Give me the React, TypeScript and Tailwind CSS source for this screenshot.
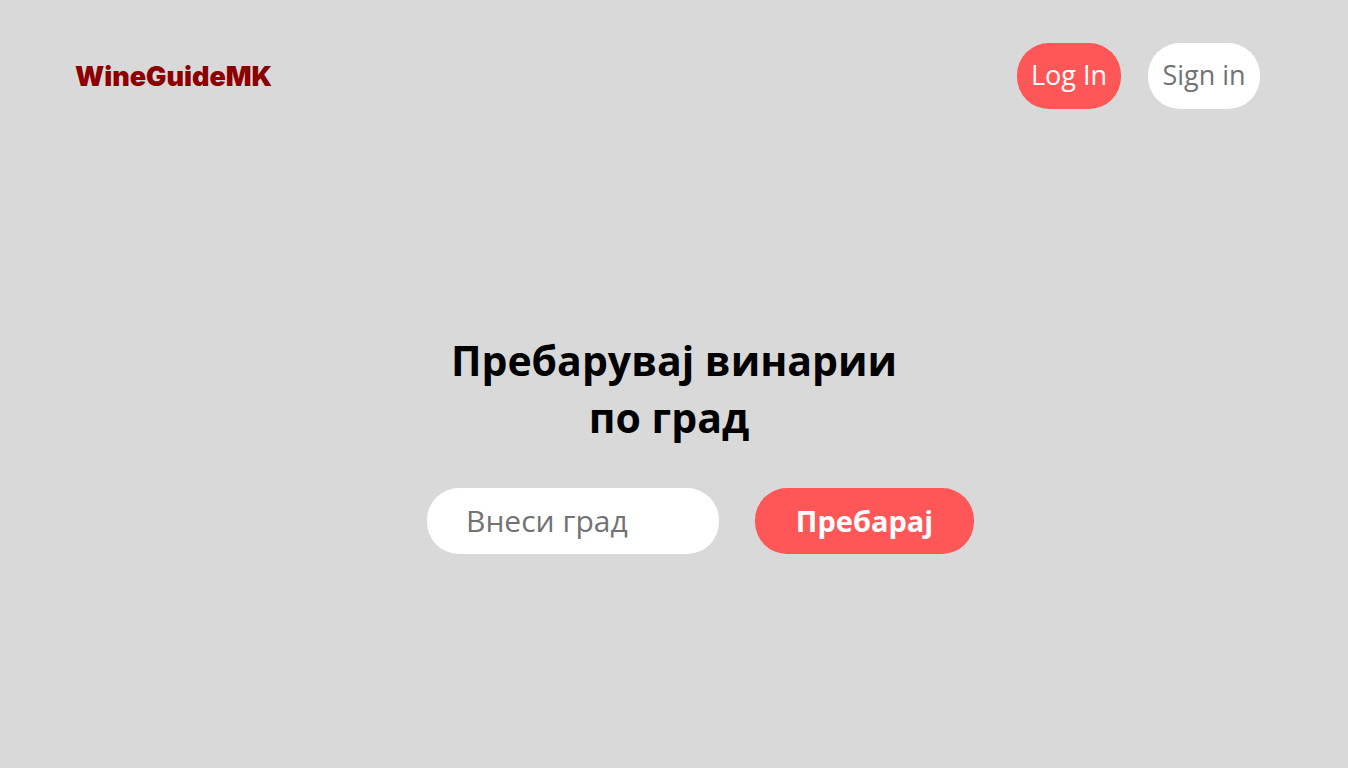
import React from "react";

export default function App() {
  return (
    <div className="min-h-screen bg-[#d9d9d9] font-['Open_Sans','Noto_Sans',sans-serif]">
      <header className="flex items-center justify-between pt-[43px] pr-[88px] pl-[75px]">
        <a href="#" className="pt-0.5 font-['Inter',sans-serif] text-[27px] leading-9 font-black text-[#8b0000]">
          WineGuideMK
        </a>
        <nav className="flex gap-[27px] text-[27px] font-normal">
          <button type="button" className="h-[66px] w-[104px] rounded-[32px] bg-[#ff5757] pb-0.5 text-white">
            Log In
          </button>
          <button type="button" className="h-[66px] w-[112px] rounded-[32px] bg-white pb-0.5 text-[#737373]">
            Sign in
          </button>
        </nav>
      </header>
      <main className="flex flex-col items-center pt-[223px]">
        <h1 className="text-center text-[41px] leading-[57px] font-bold text-black">
          Пребарувај винарии
          <br />
          <span className="pr-[10px]">по град</span>
        </h1>
        <form className="mt-[42px] flex gap-9 pl-[53px]" onSubmit={(event) => event.preventDefault()}>
          <input
            type="text"
            aria-label="Внеси град"
            placeholder="Внеси град"
            className="h-[66px] w-[292px] rounded-[32px] bg-white px-[39px] pb-0.5 text-[30px] text-black outline-none placeholder:text-[#737373]"
          />
          <button type="submit" className="h-[66px] w-[219px] rounded-[32px] bg-[#ff5757] text-[29px] font-bold text-white">
            Пребарај
          </button>
        </form>
      </main>
    </div>
  );
}
